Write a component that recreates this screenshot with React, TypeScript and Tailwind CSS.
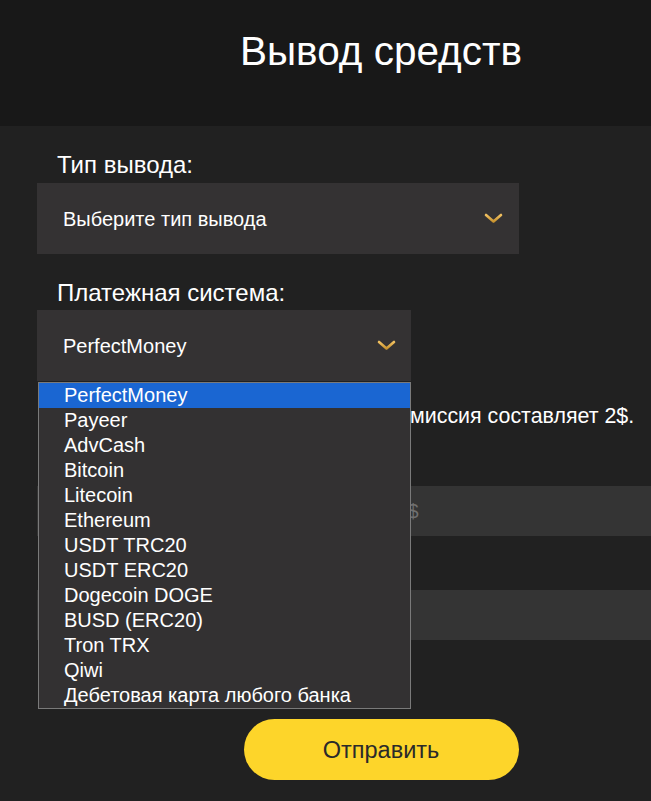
import React from "react";

const options = [
  "PerfectMoney",
  "Payeer",
  "AdvCash",
  "Bitcoin",
  "Litecoin",
  "Ethereum",
  "USDT TRC20",
  "USDT ERC20",
  "Dogecoin DOGE",
  "BUSD (ERC20)",
  "Tron TRX",
  "Qiwi",
  "Дебетовая карта любого банка",
];

function Chevron() {
  return (
    <svg width="19" height="11" viewBox="0 0 19 11" fill="none">
      <defs>
        <linearGradient id="cg" x1="0" y1="0" x2="0" y2="1">
          <stop offset="0" stopColor="#f0c060" />
          <stop offset="1" stopColor="#c8932f" />
        </linearGradient>
      </defs>
      <path d="M2 2 L9.5 8.5 L17 2" stroke="url(#cg)" strokeWidth="2.6" strokeLinecap="round" strokeLinejoin="round" />
    </svg>
  );
}

export default function App() {
  return (
    <div className="w-full min-h-screen overflow-hidden bg-[#212121] font-['Liberation_Sans',Arial,sans-serif] text-white">
      <div className="w-[762px]">
        <header className="h-[126px] bg-[#181818] pt-[28px]">
          <h1 className="text-center text-[40.5px] leading-[46px] font-normal">Вывод средств</h1>
        </header>
        <main className="px-[37px] pt-[25px] pb-[40px]">
          <label className="block pl-[20px] text-[24px] leading-[28px] mb-[4px]">Тип вывода:</label>
          <div className="w-[482px] h-[71px] bg-[#343233] flex items-center justify-between pl-[26px] pr-[16px]">
            <span className="text-[20px] leading-[24px]">Выберите тип вывода</span>
            <Chevron />
          </div>

          <label className="block pl-[20px] text-[24px] leading-[28px] mt-[25px] mb-[3px]">Платежная система:</label>
          <div className="relative w-[374px]">
            <div className="h-[71px] bg-[#343233] flex items-center justify-between pl-[26px] pr-[15px]">
              <span className="text-[20px] leading-[24px]">PerfectMoney</span>
              <Chevron />
            </div>
            <ul className="absolute z-10 left-[1px] right-0 top-[calc(100%+1px)] bg-[#333132] border border-[#7a7a7a]">
              {options.map((o, i) => (
                <li
                  key={o}
                  className={
                    i === 0
                      ? "h-[25px] pl-[25px] text-[20px] leading-[25px] bg-[#1a66d2] text-white"
                      : "h-[25px] pl-[25px] text-[20px] leading-[25px] text-white"
                  }
                >
                  {o}
                </li>
              ))}
            </ul>
          </div>

          <p className="mt-[22px] pl-[20px] text-[21.4px] leading-[26px]">Минимальная сумма вывода 5$. Комиссия составляет 2$.</p>

          <label className="block pl-[20px] text-[24px] leading-[28px] mt-[26px] mb-[3px]">Сумма:</label>
          <div className="h-[50px] bg-[#343434] flex items-center pl-[26px]">
            <span className="text-[20px] leading-[24px] text-[#6f6f6f]">Введите желаемую сумму вывода, в $</span>
          </div>

          <label className="block pl-[20px] text-[24px] leading-[28px] mt-[23px] mb-[3px]">Кошелек:</label>
          <div className="h-[50px] bg-[#343434]" />

          <div className="flex justify-center mt-[79px]">
            <button className="w-[275px] h-[61px] rounded-full bg-[#fdd52a] text-[#2a2a2a] text-[23.5px] leading-[26px]">
              Отправить
            </button>
          </div>
        </main>
      </div>
    </div>
  );
}
